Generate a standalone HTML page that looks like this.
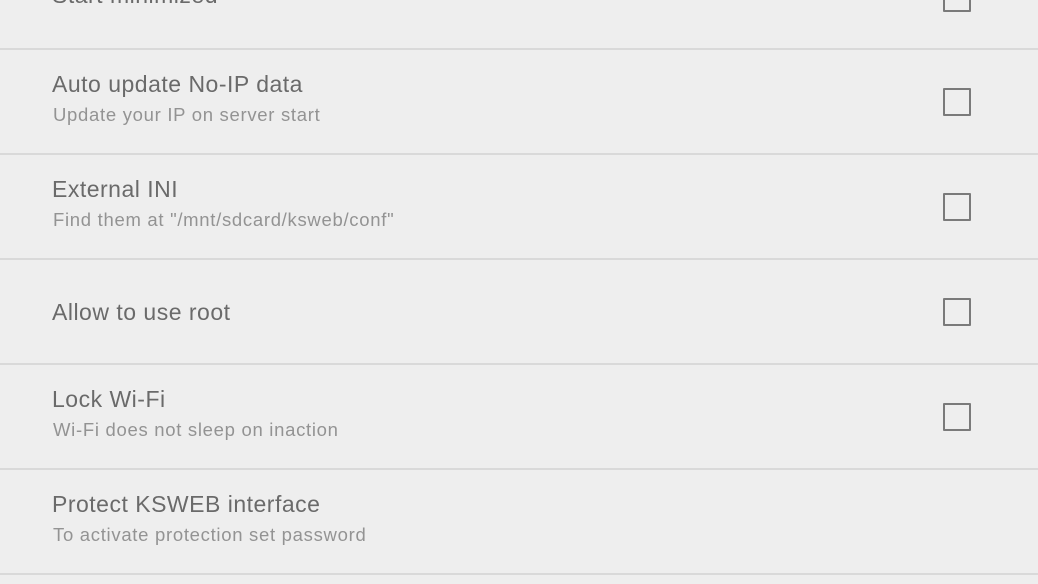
<!DOCTYPE html>
<html><head><style>
body{margin:0;width:1038px;height:584px;background:#eeeeee;overflow:hidden;position:relative;font-family:"Liberation Sans",Arial,sans-serif}
.t{position:absolute;left:52px;font-size:23px;letter-spacing:0.5px;color:#6a6a6a;line-height:24px;white-space:nowrap}
.s{position:absolute;left:53px;font-size:18.5px;letter-spacing:0.7px;color:#939393;line-height:20px;white-space:nowrap}
.d{position:absolute;left:0;width:1038px;height:2px;background:#d9d9d9}
.c{position:absolute;left:943px;width:24px;height:24px;border:2px solid #7a7a7a;border-radius:1px}
</style></head><body>
<div class="t" style="top:-17px">Start minimized</div>
<div class="c" style="top:-16px"></div>
<div class="d" style="top:48px"></div>
<div class="t" style="top:72px">Auto update No-IP data</div>
<div class="s" style="top:105px">Update your IP on server start</div>
<div class="c" style="top:88px"></div>
<div class="d" style="top:153px"></div>
<div class="t" style="top:177px">External INI</div>
<div class="s" style="top:210px">Find them at "/mnt/sdcard/ksweb/conf"</div>
<div class="c" style="top:193px"></div>
<div class="d" style="top:258px"></div>
<div class="t" style="top:300px">Allow to use root</div>
<div class="c" style="top:298px"></div>
<div class="d" style="top:363px"></div>
<div class="t" style="top:387px">Lock Wi-Fi</div>
<div class="s" style="top:420px">Wi-Fi does not sleep on inaction</div>
<div class="c" style="top:403px"></div>
<div class="d" style="top:468px"></div>
<div class="t" style="top:492px">Protect KSWEB interface</div>
<div class="s" style="top:525px">To activate protection set password</div>
<div class="d" style="top:573px"></div>
</body></html>
